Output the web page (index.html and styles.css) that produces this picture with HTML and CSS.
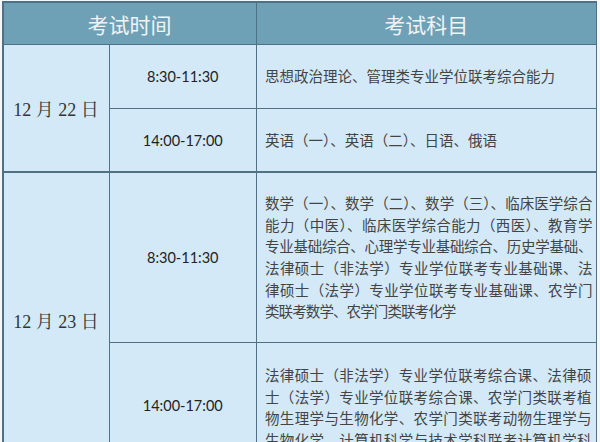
FILE: index.html
```html
<!DOCTYPE html>
<html lang="zh-CN">
<head>
<meta charset="utf-8">
<title>考试时间安排</title>
<link rel="stylesheet" href="styles.css">
</head>
<body>
<div class="schedule">
  <div class="head head-time">考试时间</div>
  <div class="head">考试科目</div>

  <div class="date date-1">12 月 22 日</div>
  <div class="time">8:30-11:30</div>
  <div class="subject">思想政治理论、管理类专业学位联考综合能力</div>

  <div class="time">14:00-17:00</div>
  <div class="subject">英语（一）、英语（二）、日语、俄语</div>

  <div class="date date-2">12 月 23 日</div>
  <div class="time">8:30-11:30</div>
  <div class="subject subject-tight">
    <span class="line">数学（一）、数学（二）、数学（三）、临床医学综合</span>
    <span class="line">能力（中医）、临床医学综合能力（西医）、教育学</span>
    <span class="line">专业基础综合、心理学专业基础综合、历史学基础、</span>
    <span class="line">法律硕士（非法学）专业学位联考专业基础课、法</span>
    <span class="line">律硕士（法学）专业学位联考专业基础课、农学门</span>
    <span class="line last">类联考数学、农学门类联考化学</span>
  </div>

  <div class="time">14:00-17:00</div>
  <div class="subject subject-top">
    <span class="line">法律硕士（非法学）专业学位联考综合课、法律硕</span>
    <span class="line">士（法学）专业学位联考综合课、农学门类联考植</span>
    <span class="line">物生理学与生物化学、农学门类联考动物生理学与</span>
    <span class="line">生物化学、计算机科学与技术学科联考计算机学科</span>
    <span class="line last">专业基础综合</span>
  </div>
</div>
</body>
</html>
```

FILE: styles.css
```css
html, body {
  margin: 0;
  padding: 0;
  background: #f4f8fb;
}

body {
  width: 600px;
  height: 442px;
  overflow: hidden;
}

.schedule {
  display: grid;
  grid-template-columns: 105px 145.5px 1fr;
  grid-template-rows: 41px 62.5px 62px 169px 124.5px;
  gap: 1.5px;
  padding: 1.5px;
  margin: 1px 3px 0 2px;
  background: #4f7186;
}

.head {
  background: #6ea1b5;
  color: #eef4f7;
  font-family: "Noto Sans CJK SC", sans-serif;
  font-size: 21px;
  display: flex;
  align-items: center;
  justify-content: center;
  padding-top: 1px;
}

.head-time {
  grid-column: 1 / 3;
}

.date,
.time,
.subject {
  background: #d3e9f8;
}

.date {
  grid-column: 1;
  display: flex;
  align-items: center;
  justify-content: center;
  font-family: "Liberation Serif", "Noto Serif CJK SC", "Noto Sans CJK SC", serif;
  font-size: 18px;
  color: #333;
}

.date-1 {
  grid-row: 2 / 4;
}

.date-2 {
  grid-row: 4 / 6;
}

.time {
  grid-column: 2;
  display: flex;
  align-items: center;
  justify-content: center;
  font-family: Lato, "Open Sans", sans-serif;
  font-size: 14.5px;
  color: #222;
}

.subject {
  grid-column: 3;
  display: flex;
  flex-direction: column;
  justify-content: center;
  padding: 0 4px 0 8px;
  font-family: "Noto Sans CJK SC", sans-serif;
  font-weight: 400;
  font-size: 14.5px;
  line-height: 21.6px;
  color: #444;
}

.subject-tight {
  letter-spacing: -0.9px;
}

.subject-top {
  justify-content: flex-start;
  padding-top: 21px;
}

.line {
  display: block;
  text-align: justify;
  text-align-last: justify;
  white-space: nowrap;
}

.line.last {
  text-align-last: left;
}
```
